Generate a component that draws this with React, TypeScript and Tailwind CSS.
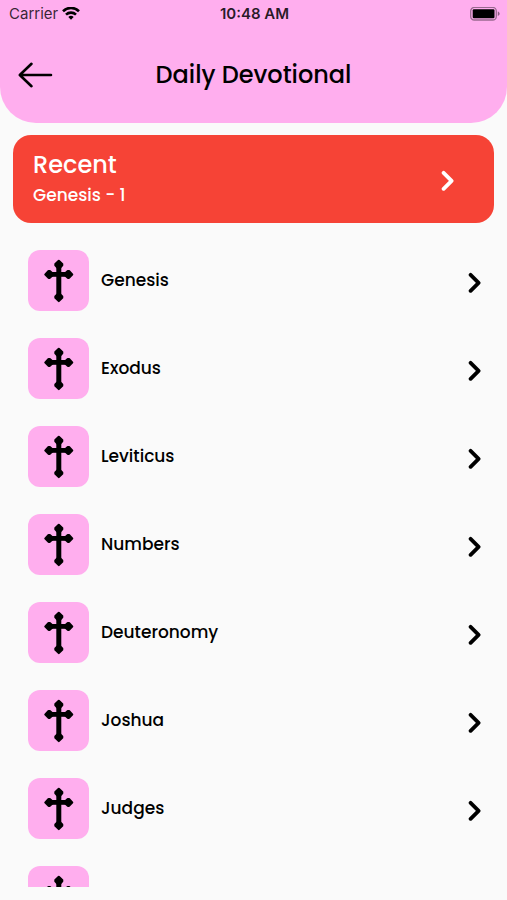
interface BookRowProps {
    name: string;
    onSelect: (name: string) => void;
}

const books = ['Genesis', 'Exodus', 'Leviticus', 'Numbers', 'Deuteronomy', 'Joshua', 'Judges', 'Ruth'];

function WifiIcon() {
    return (
        <svg viewBox="0 0 18 14" className="w-[18px] h-[14px]" fill="none" stroke="currentColor" strokeWidth="2.6" aria-hidden="true">
            <path d="M1 4.2a11.4 11.4 0 0 1 16 0" />
            <path d="M4 7.6a7.2 7.2 0 0 1 10 0" />
            <path d="M9 12.7 6.3 10a4 4 0 0 1 5.4 0z" fill="currentColor" stroke="none" />
        </svg>
    );
}

function BatteryIcon() {
    return (
        <svg viewBox="0 0 30 14" className="w-[30px] h-[14px]" aria-hidden="true">
            <rect x="0.7" y="0.4" width="25.6" height="12.6" rx="3.6" fill="none" stroke="#000" strokeOpacity="0.4" strokeWidth="1.3" />
            <rect x="2.7" y="2.2" width="21.8" height="9" rx="1.2" fill="#000" />
            <path d="M27.8 4.5c2.4.7 2.4 3.7 0 4.4z" fill="#000" fillOpacity="0.45" />
        </svg>
    );
}

function BackIcon() {
    return (
        <svg viewBox="0 0 36 28" className="w-9 h-7" fill="none" stroke="currentColor" strokeWidth="2.6" strokeLinecap="round" strokeLinejoin="round" aria-hidden="true">
            <path d="M34 14H3M14.5 2.8 2.8 14l11.7 11.2" />
        </svg>
    );
}

function ChevronIcon() {
    return (
        <svg viewBox="0 0 14 22" className="w-[14px] h-[22px] shrink-0" fill="none" stroke="currentColor" strokeWidth="3.8" strokeLinecap="round" strokeLinejoin="round" aria-hidden="true">
            <path d="M2.6 2.8l8 8-8 8" />
        </svg>
    );
}

function CrossIcon() {
    return (
        <svg viewBox="0 0 30 44" className="w-[30px] h-[44px]" fill="currentColor" aria-hidden="true">
            <path d="M12.3 4h5v36h-5z" />
            <path d="M4 13h22v4.8H4z" />
            {/* Rounded caps on the four arms */}
            <g stroke="currentColor" strokeWidth="2.2" strokeLinejoin="round">
                <path d="M14.8 1.8 18.2 5v1.2l-2 2.2h-2.8l-2-2.2V5z" />
                <path d="M14.8 42 18.2 38.8v-1.2l-2-2.2h-2.8l-2 2.2v1.2z" />
                <path d="M1.4 15.4 4.6 12h1.2l2.2 2v2.8l-2.2 2H4.6z" />
                <path d="M28.2 15.4 25 12h-1.2l-2.2 2v2.8l2.2 2H25z" />
            </g>
        </svg>
    );
}

function BookRow({ name, onSelect }: BookRowProps) {
    return (
        <li>
            <button
                type="button"
                onClick={() => onSelect(name)}
                className="flex w-full items-center pt-[14px] pb-[13px] pl-7 pr-[25px] text-left text-black"
            >
                <span className="flex w-[61px] h-[61px] shrink-0 items-center justify-center rounded-xl bg-[#ffaeee]">
                    <CrossIcon />
                </span>
                <span className="ml-3 flex-1 pb-px text-[17px] leading-6 font-medium">{name}</span>
                <span className="pt-1">
                    <ChevronIcon />
                </span>
            </button>
        </li>
    );
}

export default function App() {
    const openBook = (name: string) => {
        window.location.hash = name.toLowerCase();
    };

    return (
        <div className="flex h-screen flex-col bg-[#fafafa] pb-[13px] font-[Poppins,Inter,sans-serif] text-black">
            <header className="shrink-0 rounded-b-[36px] bg-[#ffaeee]">
                {/* Status bar */}
                <div className="grid h-7 grid-cols-3 items-center pl-[9px] pr-[7px] font-[Inter,sans-serif] text-[15px] leading-5">
                    <div className="flex items-center gap-1 text-black/80">
                        <span>Carrier</span>
                        <span className="text-black">
                            <WifiIcon />
                        </span>
                    </div>
                    <span className="text-center font-semibold text-black/85">10:48 AM</span>
                    <div className="flex justify-end">
                        <BatteryIcon />
                    </div>
                </div>

                <div className="grid grid-cols-[36px_1fr_36px] items-center px-[17px] pt-[31px] pb-8">
                    <button type="button" aria-label="Back" onClick={() => window.history.back()}>
                        <BackIcon />
                    </button>
                    <h1 className="text-center text-2xl font-medium">Daily Devotional</h1>
                </div>
            </header>

            <main className="flex min-h-0 flex-1 flex-col pt-3">
                <button
                    type="button"
                    onClick={() => openBook('Genesis')}
                    className="mx-[13px] flex h-[88px] shrink-0 items-center justify-between rounded-[18px] bg-[#f64336] pl-5 pr-[39px] text-left text-white"
                >
                    <span className="flex flex-col">
                        <span className="text-2xl font-medium">Recent</span>
                        <span className="text-[17px] leading-7 font-medium">Genesis - 1</span>
                    </span>
                    <span className="pt-1">
                        <ChevronIcon />
                    </span>
                </button>

                <ul className="mt-[13px] min-h-0 flex-1 overflow-y-auto [scrollbar-width:none]">
                    {books.map((book) => (
                        <BookRow key={book} name={book} onSelect={openBook} />
                    ))}
                </ul>
            </main>
        </div>
    );
}
